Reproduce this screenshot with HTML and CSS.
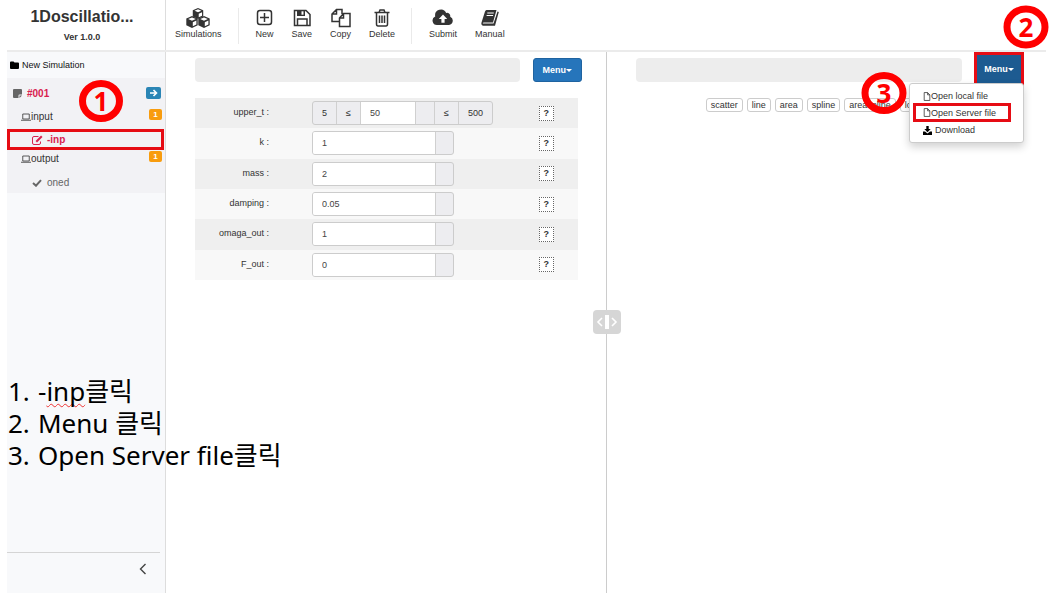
FILE: index.html
```html
<!DOCTYPE html>
<html lang="ko">
<head>
<meta charset="utf-8">
<title>1Doscillation</title>
<link rel="stylesheet" href="styles.css">
</head>
<body>
<svg class="defs" aria-hidden="true">
  <symbol id="doc" viewBox="0 0 14 16"><path d="M2 1h6l4 4v10H2zM8 1v4h4" fill="none" stroke="currentColor" stroke-width="1.4"/></symbol>
  <symbol id="laptop" viewBox="0 0 20 16"><path d="M3.500 2h13v10h-13zM0 14.500h20" fill="none" stroke="currentColor" stroke-width="1.600"/></symbol>
  <symbol id="cube" viewBox="0 0 12 12"><path d="M6 0 11.700 2.500v6.700L6 12 .3 9.200V2.500z" fill="#333" stroke="none"/><path d="M6 1.400 9.800 3 6 4.700 2.200 3zM6.800 6.200 10.400 4.600v3.900L6.800 10.200z" fill="#fff" stroke="none"/></symbol>
</svg>
<div class="app">
  <header class="top">
    <div class="brand">
      <h1>1Doscillatio...</h1>
      <p>Ver 1.0.0</p>
    </div>
    <nav class="tools">
      <button class="tool"><svg width="24" height="20" viewBox="0 0 24 20"><use href="#cube" x="6" y="0" width="12" height="11"/><use href="#cube" x="0" y="8" width="12" height="12"/><use href="#cube" x="12" y="8" width="12" height="12"/></svg>Simulations</button>
      <span class="rule"></span>
      <button class="tool"><svg width="18" height="20" viewBox="0 0 18 20"><rect x="1.500" y="2.500" width="14" height="14" rx="2.500"/><path d="M8.500 5v9M4 9.500h9"/></svg>New</button>
      <button class="tool"><svg width="18" height="20" viewBox="0 0 18 20"><path d="M1.500 2.500h11.500l4 4V17.500H1.500z"/><path d="M4.500 17v-6h9.500v6"/><path d="M4 2h8v6H4z" fill="#333" stroke="none"/><path d="M8.500 3.300h2v3.400h-2z" fill="#fff" stroke="none"/></svg>Save</button>
      <button class="tool"><svg width="20" height="20" viewBox="0 0 20 20"><path d="M8 13.500H1V6l4.500-4.500H11V6M5.500 1.500V6H1M12.500 5.500H19v13H8.500V10zM12.500 5.500V10h-4"/></svg>Copy</button>
      <button class="tool"><svg width="16" height="20" viewBox="0 0 16 20"><path d="M.5 4.500h15M5 4.500l1-2.500h4l1 2.500M2.500 4.500V16q0 2 1.500 2h8q1.500 0 1.500-2V4.500M5.500 7.500v7.500M8 7.500v7.500M10.500 7.500v7.500"/></svg>Delete</button>
      <span class="rule"></span>
      <button class="tool"><svg width="22" height="20" viewBox="0 0 22 20"><path d="M5 17a4.500 4.500 0 0 1-1.800-8.600A5.800 5.800 0 0 1 14.200 5a3.200 3.200 0 0 1 4 3.800A4.300 4.300 0 0 1 17 17z" fill="#333" stroke="none"/><path d="M11 6.500 15.200 11h-2.600v3.800H9.400V11H6.800z" fill="#fff" stroke="none"/></svg>Submit</button>
      <button class="tool"><svg width="20" height="20" viewBox="0 0 20 20"><path d="M6.500 2H16.500L13 14.500H4q-1.500 0-1.200 1H13.500L17.500 3.500l1.300.6L15 17.800H3Q.8 17 1.500 14.500L5 3.500Q5.500 2 6.500 2z" fill="#333" stroke="none"/><path d="M7.300 5h6.500M6.600 7.500h6.500" stroke="#fff" stroke-width="1"/></svg>Manual</button>
    </nav>
    <span class="mark m2"><svg viewBox="0 0 46 44"><ellipse cx="23" cy="22" rx="19" ry="18"/></svg>2</span>
  </header>

  <div class="body">
    <aside class="side">
      <a class="newsim" href="#"><svg width="9" height="8" viewBox="0 0 9 8"><path d="M1 .5h2.500l1 1H8q1 0 1 1V7q0 1-1 1H1Q0 8 0 7V1.500q0-1 1-1z"/></svg>New Simulation</a>
      <div class="tree">
        <div class="node root"><svg width="9" height="9" viewBox="0 0 9 9"><path d="M1 0h7q1 0 1 1v4.500H6.500q-1 0-1 1V9H1Q0 9 0 8V1q0-1 1-1zM6.500 6.500H9L6.500 9z" fill="#666"/></svg><b>#001</b>
          <button class="go" aria-label="Open"><svg width="8" height="8" viewBox="0 0 8 8"><path d="M0 4h6M3.500 1 6.500 4 3.500 7" fill="none" stroke="#fff" stroke-width="1.600"/></svg></button></div>
        <div class="node sub"><svg width="10" height="8"><use href="#laptop"/></svg>input<span class="num">1</span></div>
        <div class="node leaf picked"><svg width="11" height="10" viewBox="0 0 11 10" fill="none" stroke="currentColor"><path d="M6.500 1.500H2Q.5 1.500.5 3v5q0 1.500 1.500 1.500h5Q8.500 9.500 8.500 8V6.500"/><path d="M4.300 6.800 9.800 1.300" stroke-width="2"/></svg>-inp</div>
        <div class="node sub out"><svg width="10" height="8"><use href="#laptop"/></svg>output<span class="num">1</span></div>
        <div class="node leaf done"><svg width="10" height="8" viewBox="0 0 10 8"><path d="M1 4l3 2.700L9 1.200" fill="none" stroke="#666" stroke-width="2"/></svg>oned</div>
      </div>
      <div class="fold"><button aria-label="Collapse"><svg width="8" height="12" viewBox="0 0 8 12"><path d="M6.500 1 1.500 6l5 5" fill="none" stroke="#444" stroke-width="1.400"/></svg></button></div>
      <span class="mark m1"><svg viewBox="0 0 44 42"><ellipse cx="22" cy="21" rx="18.500" ry="17.500"/></svg>1</span>
    </aside>

    <main class="panel">
      <div class="bar"><div class="path"></div><button class="menu">Menu<i></i></button></div>
      <form class="params">
        <div class="row"><label for="u">upper_t :</label><div class="group range"><span>5</span><span>≤</span><input id="u" value="50"><span class="unit"></span><span>≤</span><span class="max">500</span></div><button type="button" class="help">?</button></div>
        <div class="row"><label for="k">k :</label><div class="group"><input id="k" value="1"><span class="unit"></span></div><button type="button" class="help">?</button></div>
        <div class="row"><label for="m">mass :</label><div class="group"><input id="m" value="2"><span class="unit"></span></div><button type="button" class="help">?</button></div>
        <div class="row"><label for="d">damping :</label><div class="group"><input id="d" value="0.05"><span class="unit"></span></div><button type="button" class="help">?</button></div>
        <div class="row"><label for="o">omaga_out :</label><div class="group"><input id="o" value="1"><span class="unit"></span></div><button type="button" class="help">?</button></div>
        <div class="row"><label for="f">F_out :</label><div class="group"><input id="f" value="0"><span class="unit"></span></div><button type="button" class="help">?</button></div>
      </form>
    </main>

    <div class="split"><button aria-label="Resize panels"><svg width="28" height="24" viewBox="0 0 28 24"><path d="M9 8 5 12l4 4M19 8l4 4-4 4" fill="none" stroke="#fff" stroke-width="1.600"/><path d="M12 5h4v14h-4z" fill="#fff"/></svg></button></div>

    <section class="panel right">
      <div class="bar"><div class="path"></div>
        <div class="drop"><button class="menu open">Menu<i></i></button>
          <div class="list">
            <a href="#"><svg width="8" height="9"><use href="#doc"/></svg>Open local file</a>
            <a href="#" class="target"><svg width="8" height="9"><use href="#doc"/></svg>Open Server file</a>
            <a href="#" class="down"><svg width="9" height="9" viewBox="0 0 9 9"><path d="M3.300 0h2.400v3h2L4.500 6.200 1.300 3h2zM0 5.500h2l2.500 2 2.500-2h2V9H0z"/></svg>Download</a>
          </div>
        </div>
      </div>
      <div class="kinds"><button>scatter</button><button>line</button><button>area</button><button>spline</button><button>areaspline</button><button>log</button></div>
      <span class="mark m3"><svg viewBox="0 0 46 42"><ellipse cx="23" cy="21" rx="19" ry="17.500"/></svg>3</span>
    </section>
  </div>
  <ol class="steps">
    <li><span>1.</span>-<u>inp</u>클릭</li>
    <li><span>2.</span>Menu 클릭</li>
    <li><span>3.</span>Open Server file클릭</li>
  </ol>
</div>
</body>
</html>
```

FILE: styles.css
```css
* { box-sizing: border-box; }
body { margin: 0; background: #fff; color: #333; font: 9px/12px "Liberation Sans", Arial, sans-serif; }
button, input { font: inherit; color: inherit; margin: 0; padding: 0; }
button { cursor: pointer; border: 0; background: none; }
a { color: inherit; text-decoration: none; }
h1, p { margin: 0; }
.defs { position: absolute; width: 0; height: 0; }
.app { position: relative; min-height: 100vh; padding: 0 6px 0 7px; display: flex; flex-direction: column; }

.top { position: relative; display: flex; height: 52px; border-bottom: 2px solid #ebebeb; }
.brand { width: 159px; border-right: 1px solid #ddd; padding: 7px 8px 0 0; text-align: center; }
.brand h1 { font-size: 16px; line-height: 20px; }
.brand p { margin-top: 4px; font-weight: bold; }
.tools { display: flex; align-items: flex-start; gap: 18px; padding: 8px 0 0 9px; }
.tool { display: flex; flex-direction: column; align-items: center; white-space: nowrap; }
.tool svg { fill: none; stroke: #333; stroke-width: 1.5px; }
.rule { width: 1px; height: 36px; margin: 0 -1px 0 -2px; background: #eaeaea; }

.body { flex: 1; display: flex; }
.side { position: relative; width: 159px; flex: none; display: flex; flex-direction: column; background: #f8f9fb; border-right: 1px solid #ddd; }
.newsim { display: flex; align-items: center; gap: 3px; height: 25px; padding-left: 3px; color: #111; }
.tree { background: #f2f2f5; padding-top: 4px; margin-top: 1px; }
.node { display: flex; align-items: center; height: 23px; position: relative; }
.root { padding-left: 6px; gap: 5px; color: #d9214e; }
.root b { font-size: 10px; }
.go { display: grid; place-items: center; width: 15px; height: 12px; margin: 0 4px 1px auto; border-radius: 2px; background: #2a85b5; }
.sub { padding-left: 14px; font-size: 10px; }
.num { width: 13px; height: 11px; margin: 0 3px 4px auto; border-radius: 2px; background: #f89c0e; color: #fff; font-size: 8px; line-height: 11px; font-weight: bold; text-align: center; }
.leaf { padding-left: 25px; gap: 5px; font-size: 10px; }
.picked { color: #d9214e; font-weight: bold; width: 157px; height: 21px; border: 3px solid #e60c14; margin-top: 1px; padding-left: 22px; gap: 4px; }
.out { height: 18px; }
.out .num { margin-bottom: 5px; }
.done { height: 25px; padding-top: 5px; color: #666; }
.fold { margin-top: auto; width: 153px; height: 41px; border-top: 1px solid #d5d5d5; display: flex; justify-content: flex-end; align-items: center; padding: 0 13px 5px 0; }

.panel { position: relative; flex: 1 1 50%; min-width: 0; padding: 6px 24px 0 29px; }
.bar { display: flex; gap: 13px; height: 24px; }
.path { flex: 1; background: #ededed; border-radius: 4px; }
.menu { width: 49px; height: 24px; border: 1px solid #1f63a0; border-radius: 3px; background: #2675bb; color: #fff; font-weight: bold; }
.menu i { display: inline-block; border: 3px solid transparent; border-top-color: #fff; border-bottom: 0; vertical-align: 1px; }
.params { display: grid; grid-auto-rows: 1fr; min-height: 182px; margin: 16px 4px 0 0; }
.row { display: flex; align-items: center; background: #f8f8f8; }
.row:nth-child(odd) { background: #efefef; }
.row label { width: 74px; text-align: right; margin-right: 43px; padding-bottom: 2px; }
.group { display: flex; width: 142px; height: 24px; border: 1px solid #ccc; border-radius: 3px; overflow: hidden; background: #ededf0; }
.group input { flex: 1; min-width: 0; border: 0; background: #fff; padding-left: 9px; color: #444; outline: 0; }
.group span { width: 24px; line-height: 22px; text-align: center; border-right: 1px solid #d0d0d0; }
.group .unit { width: 18px; border-left: 1px solid #d0d0d0; border-right: 0; }
.range { width: 181px; }
.range .unit { width: 20px; border-right: 1px solid #d0d0d0; }
.group .max { width: 33px; border-right: 0; }
.help { width: 15px; height: 15px; margin: 0 24px 0 auto; border: 1px dotted #666; background: #fff; font-weight: bold; line-height: 13px; }

.split { width: 1px; background: #ccc; position: relative; flex: none; }
.split button { position: absolute; left: -13px; top: 258px; height: 24px; border-radius: 4px; background: #d6d6d6; }
.right { padding-right: 22px; }
.right .bar { gap: 12px; }
.drop { position: relative; }
.open { width: 50px; height: 34px; margin-top: -6px; border: 3px solid #e60c14; border-radius: 0; background: #1d5b91; }
.list { position: absolute; right: 0; top: 25px; z-index: 2; width: 115px; padding: 4px 0; background: #fff; border: 1px solid #ccc; border-radius: 3px; box-shadow: 0 4px 8px rgba(0, 0, 0, .18); }
.list a { display: flex; align-items: center; height: 16px; padding-left: 13px; white-space: nowrap; }
.list .target { width: 98px; height: 19px; margin: -1px 0 0 3px; padding-left: 7px; border: 3px solid #e60c14; }
.list .down { gap: 3px; }
.kinds { display: flex; gap: 4px; margin: 16px 0 0 70px; }
.kinds button { height: 14px; padding: 0 4px; border: 1px solid #ccc; border-radius: 3px; line-height: 12px; }

.mark { position: absolute; z-index: 3; display: grid; place-items: center; color: #f00; font: bold 26px/40px "Noto Sans", sans-serif; }
.mark svg { position: absolute; inset: 0; fill: none; stroke: #f00; stroke-width: 7px; }
.m1 { left: 72px; top: 28px; width: 44px; height: 42px; }
.m2 { right: -3px; top: 5px; width: 46px; height: 44px; }
.m3 { right: 139px; top: 20px; width: 46px; height: 42px; }
.steps { position: absolute; left: 8px; top: 375px; margin: 0; padding: 0; list-style: none; color: #000; font: 26px/32px "Noto Sans", "Noto Sans CJK KR", sans-serif; white-space: nowrap; }
.steps span { display: inline-block; width: 30px; }
.steps u { text-decoration: underline wavy #e33 1px; text-underline-offset: 2px; text-decoration-skip-ink: none; }
```
